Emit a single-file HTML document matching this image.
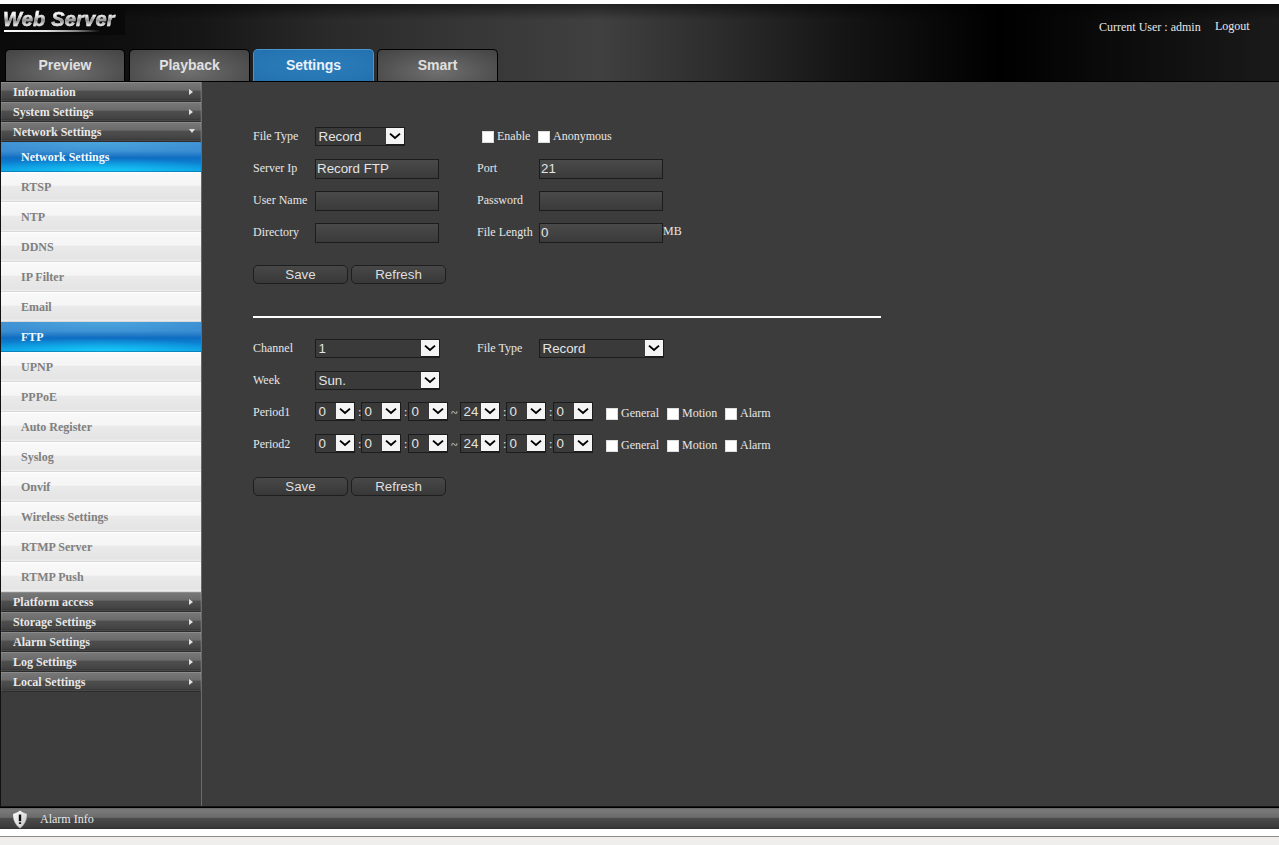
<!DOCTYPE html>
<html><head><meta charset="utf-8">
<style>
*{box-sizing:border-box;margin:0;padding:0}
html,body{width:1279px;height:845px;overflow:hidden;background:#fff;font-family:"Liberation Serif",serif;}
#hdr{position:absolute;left:0;top:4px;width:1279px;height:78px;background:linear-gradient(90deg,#0b0b0b 0px,#0e0e0e 100px,#161616 200px,#2a2a2a 330px,#353535 450px,#404040 600px,#2c2c2c 720px,#141414 850px,#000 1000px,#0a0a0a 1100px,#1a1a1a 1279px);border-bottom:1px solid #000}
#hshade{position:absolute;left:0;top:4px;width:1279px;height:16px;background:linear-gradient(rgba(0,0,0,0.45),rgba(0,0,0,0))}
#logobox{position:absolute;left:0;top:4px;width:125px;height:31px;background:#090909}
#logo{position:absolute;left:3px;top:8px;font:italic bold 20px "Liberation Sans",sans-serif;letter-spacing:0.2px;transform:scaleY(1.04);transform-origin:0 85%;background:linear-gradient(#fff 15%,#f0f0f0 35%,#8a8a8a 55%,#e8e8e8 75%,#aaa 90%);-webkit-background-clip:text;background-clip:text;color:transparent;-webkit-text-stroke:0.5px rgba(220,220,220,0.55);padding-right:4px}
#logoline{position:absolute;left:4px;top:30px;width:96px;height:2px;background:linear-gradient(90deg,#fff 0,#e0e0e0 45%,#888 75%,rgba(255,255,255,0) 100%)}
.tab{position:absolute;top:49px;height:32px;border-radius:5px 5px 0 0;font:bold 14px "Liberation Sans",sans-serif;color:#e0e0e0;text-align:center;line-height:30px;background:radial-gradient(ellipse at 50% 70%,#707070 0,#545454 60%,#434343 100%);border:1px solid #000;border-bottom:none}
.tab.on{background:radial-gradient(ellipse at 50% 50%,#2d7dbb 0,#2777b5 60%,#2371ae 100%);color:#e8f2fa;border-color:#4c94cc}
#user{position:absolute;top:20px;left:1099px;font-size:12px;color:#e8e8e8;white-space:nowrap}
#logout{position:absolute;top:19px;left:1215px;font-size:12px;color:#e8e8e8}
#main{position:absolute;left:0;top:82px;width:1279px;height:724px;background:#3c3c3c}
#side{position:absolute;left:0;top:82px;width:202px;height:724px;border-right:1px solid #6b6b6b;border-left:1px solid #111}
.g{position:absolute;left:1px;width:200px;height:20px;background:linear-gradient(#8c8c8c 0,#888 1px,#767676 1.5px,#6b6b6b 8px,#5e5e5e 8.6px,#4e4e4e 9.5px,#474747 14px,#414141 17px,#3a3a3a 17.5px,#3a3a3a 18px,#484848 18.3px,#484848 19px,#2c2c2c 19.3px,#2c2c2c 20px);color:#e8e8e8;font-weight:bold;font-size:12px;line-height:20px;padding-left:12px;box-shadow:inset 1px 0 0 rgba(255,255,255,0.08),inset -1px 0 0 rgba(255,255,255,0.08)}
.s{position:absolute;left:1px;width:200px;height:30px;background:linear-gradient(#fff 0,#fcfcfc 1px,#f8f8f8 2px,#f5f5f5 13.2px,#eaeaea 14.2px,#e4e4e4 27.3px,#ececec 27.7px,#ececec 28.5px,#d8d8d8 28.8px,#d8d8d8 29.6px,#fff 29.9px);color:#808080;font-weight:bold;font-size:12px;line-height:30px;padding-left:20px}
.s.on{background:linear-gradient(rgba(0,0,0,0) 29px,rgba(0,50,100,0.35) 29.2px),radial-gradient(ellipse 70% 45% at 50% 100%,rgba(24,205,250,0.95),rgba(24,205,250,0) 100%),radial-gradient(ellipse 60% 40% at 50% 0%,rgba(80,175,225,0.7),rgba(80,175,225,0) 100%),linear-gradient(#3f8ed2 0,#3a8ed2 30%,#2179c6 45%,#0f6ec2 52%,#0b84d4 75%,#0c9fe4 100%);color:#f0fbff}
.ar{position:absolute;left:188px;top:7px;width:0;height:0;border-left:4px solid #e0e0e0;border-top:3.5px solid transparent;border-bottom:3.5px solid transparent}
.ad{position:absolute;left:188px;top:7px;width:0;height:0;border-top:4px solid #e0e0e0;border-left:3.5px solid transparent;border-right:3.5px solid transparent}
.l{position:absolute;font-size:12px;color:#e6e6e6;white-space:nowrap;line-height:14px}
.sel{position:absolute;height:19px;border:1px solid #1c1c1c;background:#3a3a3a;color:#e4e4e4;font:13.33px "Liberation Sans",sans-serif;line-height:17px;padding-left:2.5px;white-space:nowrap}
.sel b{position:absolute;right:0;top:0;width:18px;height:16px;background:#f4f4f4;box-shadow:0 1px 0 #1c1c1c}
.sel b svg{display:block}
.inp{position:absolute;width:124px;height:20px;border:1px solid #1c1c1c;background:linear-gradient(#4a4a4a,#3a3a3a);color:#e4e4e4;font:13.33px "Liberation Sans",sans-serif;line-height:17px;padding-left:1px;white-space:nowrap}
.cb{position:absolute;width:11.5px;height:11.5px;background:#fff;border:1px solid #ddd}
.btn{position:absolute;width:95px;height:19px;border:1px solid #1e1e1e;border-radius:5px;background:linear-gradient(#484848,#383838);color:#dedede;font:13.33px "Liberation Sans",sans-serif;line-height:17px;text-align:center}
#hr{position:absolute;left:253px;top:316px;width:628px;height:2px;background:#fff}
#bot{position:absolute;left:0;top:806px;width:1279px;height:23px;background:linear-gradient(#2a2a2a 0,#000 1px,#000 2px,#6a6a6a 2.5px,#7a7a7a 4px,#6e6e6e 10px,#666 11.5px,#4c4c4c 12.5px,#444 16px,#3c3c3c 21px,#2e2e2e 23px);color:#e8e8e8;font-size:12px;line-height:26px;padding-left:40px}
#shield{position:absolute;left:12px;top:809.5px}
#foot{position:absolute;left:0;top:836px;width:1279px;height:9px;background:#efeeed;border-top:1px solid #8c8c8c}
</style></head><body>
<div id="hdr"></div><div id="hshade"></div><div id="logobox"></div>
<div id="logo">Web Server</div><div id="logoline"></div>
<div class="tab" style="left:5px;width:120px">Preview</div>
<div class="tab" style="left:129px;width:121px">Playback</div>
<div class="tab on" style="left:253px;width:121px">Settings</div>
<div class="tab" style="left:377px;width:121px">Smart</div>
<div id="user">Current User : admin</div><div id="logout">Logout</div>
<div id="main"></div>
<div id="side"></div>
<div id="sidebar">
<div class="g" style="top:82px">Information<i class="ar"></i></div>
<div class="g" style="top:102px">System Settings<i class="ar"></i></div>
<div class="g" style="top:122px">Network Settings<i class="ad"></i></div>
<div class="s on" style="top:142px">Network Settings</div>
<div class="s" style="top:172px">RTSP</div>
<div class="s" style="top:202px">NTP</div>
<div class="s" style="top:232px">DDNS</div>
<div class="s" style="top:262px">IP Filter</div>
<div class="s" style="top:292px">Email</div>
<div class="s on" style="top:322px">FTP</div>
<div class="s" style="top:352px">UPNP</div>
<div class="s" style="top:382px">PPPoE</div>
<div class="s" style="top:412px">Auto Register</div>
<div class="s" style="top:442px">Syslog</div>
<div class="s" style="top:472px">Onvif</div>
<div class="s" style="top:502px">Wireless Settings</div>
<div class="s" style="top:532px">RTMP Server</div>
<div class="s" style="top:562px">RTMP Push</div>
<div class="g" style="top:592px">Platform access<i class="ar"></i></div>
<div class="g" style="top:612px">Storage Settings<i class="ar"></i></div>
<div class="g" style="top:632px">Alarm Settings<i class="ar"></i></div>
<div class="g" style="top:652px">Log Settings<i class="ar"></i></div>
<div class="g" style="top:672px">Local Settings<i class="ar"></i></div>
</div>
<div id="form">
<div class="l" style="left:253px;top:129px">File Type</div>
<div class="sel" style="left:315px;top:127px;width:90px">Record<b><svg width="18" height="16" viewBox="0 0 18 16"><path d="M4 5.6 L9 10 L14 5.6" fill="none" stroke="#000" stroke-width="1.9"/></svg></b></div>
<div class="cb" style="left:482px;top:131px"></div><div class="l" style="left:497px;top:129px">Enable</div>
<div class="cb" style="left:538px;top:131px"></div><div class="l" style="left:553px;top:129px">Anonymous</div>
<div class="l" style="left:253px;top:161px">Server Ip</div>
<div class="inp" style="left:315px;top:159px">Record FTP</div>
<div class="l" style="left:477px;top:161px">Port</div>
<div class="inp" style="left:539px;top:159px">21</div>
<div class="l" style="left:253px;top:193px">User Name</div>
<div class="inp" style="left:315px;top:191px"></div>
<div class="l" style="left:477px;top:193px">Password</div>
<div class="inp" style="left:539px;top:191px"></div>
<div class="l" style="left:253px;top:225px">Directory</div>
<div class="inp" style="left:315px;top:223px"></div>
<div class="l" style="left:477px;top:225px">File Length</div>
<div class="inp" style="left:539px;top:223px">0</div>
<div class="l" style="left:663px;top:224px">MB</div>
<div class="btn" style="left:253px;top:265px">Save</div>
<div class="btn" style="left:351px;top:265px">Refresh</div>
<div id="hr"></div>
<div class="l" style="left:253px;top:341px">Channel</div>
<div class="sel" style="left:315px;top:339px;width:125px">1<b><svg width="18" height="16" viewBox="0 0 18 16"><path d="M4 5.6 L9 10 L14 5.6" fill="none" stroke="#000" stroke-width="1.9"/></svg></b></div>
<div class="l" style="left:477px;top:341px">File Type</div>
<div class="sel" style="left:539px;top:339px;width:125px">Record<b><svg width="18" height="16" viewBox="0 0 18 16"><path d="M4 5.6 L9 10 L14 5.6" fill="none" stroke="#000" stroke-width="1.9"/></svg></b></div>
<div class="l" style="left:253px;top:373px">Week</div>
<div class="sel" style="left:315px;top:371px;width:125px">Sun.<b><svg width="18" height="16" viewBox="0 0 18 16"><path d="M4 5.6 L9 10 L14 5.6" fill="none" stroke="#000" stroke-width="1.9"/></svg></b></div>
<div class="l" style="left:253px;top:405px">Period1</div>
<div class="sel" style="left:315px;top:402px;width:40px">0<b><svg width="18" height="16" viewBox="0 0 18 16"><path d="M4 5.6 L9 10 L14 5.6" fill="none" stroke="#000" stroke-width="1.9"/></svg></b></div>
<div class="sel" style="left:361px;top:402px;width:40px">0<b><svg width="18" height="16" viewBox="0 0 18 16"><path d="M4 5.6 L9 10 L14 5.6" fill="none" stroke="#000" stroke-width="1.9"/></svg></b></div>
<div class="sel" style="left:408px;top:402px;width:40px">0<b><svg width="18" height="16" viewBox="0 0 18 16"><path d="M4 5.6 L9 10 L14 5.6" fill="none" stroke="#000" stroke-width="1.9"/></svg></b></div>
<div class="sel" style="left:460px;top:402px;width:40px">24<b><svg width="18" height="16" viewBox="0 0 18 16"><path d="M4 5.6 L9 10 L14 5.6" fill="none" stroke="#000" stroke-width="1.9"/></svg></b></div>
<div class="sel" style="left:506px;top:402px;width:40px">0<b><svg width="18" height="16" viewBox="0 0 18 16"><path d="M4 5.6 L9 10 L14 5.6" fill="none" stroke="#000" stroke-width="1.9"/></svg></b></div>
<div class="sel" style="left:553px;top:402px;width:40px">0<b><svg width="18" height="16" viewBox="0 0 18 16"><path d="M4 5.6 L9 10 L14 5.6" fill="none" stroke="#000" stroke-width="1.9"/></svg></b></div>
<div class="l" style="left:358px;top:405px">:</div>
<div class="l" style="left:404px;top:405px">:</div>
<div class="l" style="left:503px;top:405px">:</div>
<div class="l" style="left:549px;top:405px">:</div>
<div class="l" style="left:451px;top:406px">~</div>
<div class="cb" style="left:606px;top:408px"></div><div class="l" style="left:621px;top:406px">General</div>
<div class="cb" style="left:667px;top:408px"></div><div class="l" style="left:682px;top:406px">Motion</div>
<div class="cb" style="left:725px;top:408px"></div><div class="l" style="left:740px;top:406px">Alarm</div>
<div class="l" style="left:253px;top:437px">Period2</div>
<div class="sel" style="left:315px;top:434px;width:40px">0<b><svg width="18" height="16" viewBox="0 0 18 16"><path d="M4 5.6 L9 10 L14 5.6" fill="none" stroke="#000" stroke-width="1.9"/></svg></b></div>
<div class="sel" style="left:361px;top:434px;width:40px">0<b><svg width="18" height="16" viewBox="0 0 18 16"><path d="M4 5.6 L9 10 L14 5.6" fill="none" stroke="#000" stroke-width="1.9"/></svg></b></div>
<div class="sel" style="left:408px;top:434px;width:40px">0<b><svg width="18" height="16" viewBox="0 0 18 16"><path d="M4 5.6 L9 10 L14 5.6" fill="none" stroke="#000" stroke-width="1.9"/></svg></b></div>
<div class="sel" style="left:460px;top:434px;width:40px">24<b><svg width="18" height="16" viewBox="0 0 18 16"><path d="M4 5.6 L9 10 L14 5.6" fill="none" stroke="#000" stroke-width="1.9"/></svg></b></div>
<div class="sel" style="left:506px;top:434px;width:40px">0<b><svg width="18" height="16" viewBox="0 0 18 16"><path d="M4 5.6 L9 10 L14 5.6" fill="none" stroke="#000" stroke-width="1.9"/></svg></b></div>
<div class="sel" style="left:553px;top:434px;width:40px">0<b><svg width="18" height="16" viewBox="0 0 18 16"><path d="M4 5.6 L9 10 L14 5.6" fill="none" stroke="#000" stroke-width="1.9"/></svg></b></div>
<div class="l" style="left:358px;top:437px">:</div>
<div class="l" style="left:404px;top:437px">:</div>
<div class="l" style="left:503px;top:437px">:</div>
<div class="l" style="left:549px;top:437px">:</div>
<div class="l" style="left:451px;top:438px">~</div>
<div class="cb" style="left:606px;top:440px"></div><div class="l" style="left:621px;top:438px">General</div>
<div class="cb" style="left:667px;top:440px"></div><div class="l" style="left:682px;top:438px">Motion</div>
<div class="cb" style="left:725px;top:440px"></div><div class="l" style="left:740px;top:438px">Alarm</div>
<div class="btn" style="left:253px;top:477px">Save</div>
<div class="btn" style="left:351px;top:477px">Refresh</div>
</div>
<div id="bot">Alarm Info</div>
<svg id="shield" width="16" height="19" viewBox="0 0 16 19"><defs><linearGradient id="sg" x1="0" y1="0" x2="1" y2="1"><stop offset="0" stop-color="#fff"/><stop offset="0.5" stop-color="#e2e2e2"/><stop offset="1" stop-color="#bdbdbd"/></linearGradient></defs><path d="M8 0 C6.2 1.6 3.4 3 0.8 3.5 C0.5 9 2.6 14.6 8 18.5 C13.4 14.6 15.5 9 15.2 3.5 C12.6 3 9.8 1.6 8 0 Z" fill="url(#sg)" stroke="#555" stroke-width="0.5"/><rect x="6.8" y="4.6" width="2.4" height="6.6" fill="#0a0a0a"/><rect x="6.9" y="12.3" width="2.2" height="1.7" fill="#1a1a1a"/></svg>
<div id="foot"></div>
</body></html>
